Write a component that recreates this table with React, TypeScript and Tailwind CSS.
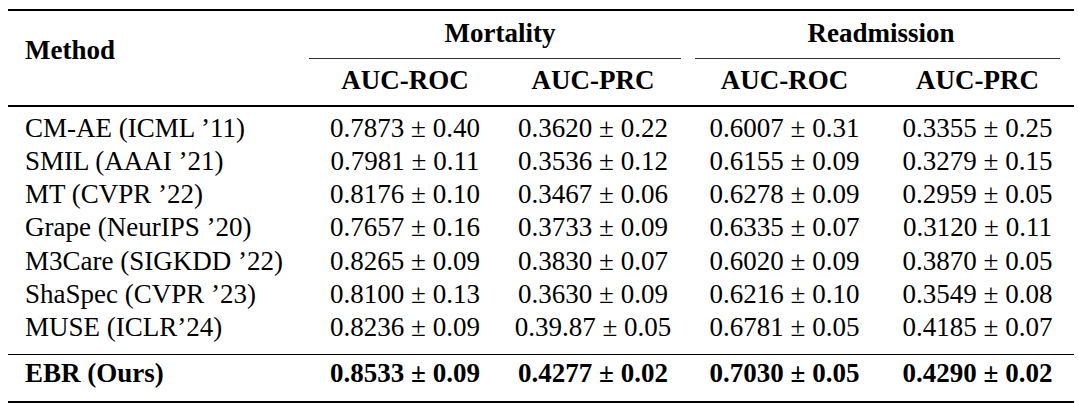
const cols = "grid grid-cols-[304px_186px_190px_193px_193px]";

const rows: string[][] = [
  ["CM-AE (ICML ’11)", "0.7873 ± 0.40", "0.3620 ± 0.22", "0.6007 ± 0.31", "0.3355 ± 0.25"],
  ["SMIL (AAAI ’21)", "0.7981 ± 0.11", "0.3536 ± 0.12", "0.6155 ± 0.09", "0.3279 ± 0.15"],
  ["MT (CVPR ’22)", "0.8176 ± 0.10", "0.3467 ± 0.06", "0.6278 ± 0.09", "0.2959 ± 0.05"],
  ["Grape (NeurIPS ’20)", "0.7657 ± 0.16", "0.3733 ± 0.09", "0.6335 ± 0.07", "0.3120 ± 0.11"],
  ["M3Care (SIGKDD ’22)", "0.8265 ± 0.09", "0.3830 ± 0.07", "0.6020 ± 0.09", "0.3870 ± 0.05"],
  ["ShaSpec (CVPR ’23)", "0.8100 ± 0.13", "0.3630 ± 0.09", "0.6216 ± 0.10", "0.3549 ± 0.08"],
  ["MUSE (ICLR’24)", "0.8236 ± 0.09", "0.39.87 ± 0.05", "0.6781 ± 0.05", "0.4185 ± 0.07"],
];

const ours = ["EBR (Ours)", "0.8533 ± 0.09", "0.4277 ± 0.02", "0.7030 ± 0.05", "0.4290 ± 0.02"];

function Row({ cells, bold }: { cells: string[]; bold?: boolean }) {
  return (
    <div className={`${cols} h-[33.33px] leading-[33px] ${bold ? "font-bold" : ""}`}>
      <div className="pl-[17px] whitespace-nowrap">{cells[0]}</div>
      {cells.slice(1).map((c, i) => (
        <div key={i} className="text-center whitespace-nowrap">
          {c}
        </div>
      ))}
    </div>
  );
}

export default function App() {
  return (
    <div className="w-[1078px] h-[403px] bg-white text-black font-['Liberation_Serif',serif] text-[27px] overflow-hidden">
      <div className="ml-[8px] w-[1066px] pt-[9px] flex flex-col">
        {/* toprule */}
        <div className="h-[2px] bg-black" />

        {/* header */}
        <div className="flex font-bold">
          <div className="w-[304px] pl-[17px] pt-[23px] leading-[33px]">Method</div>
          <div className="flex flex-col">
            <div className="grid grid-cols-[376px_386px] pt-[6px] leading-[33px]">
              <div className="text-center">Mortality</div>
              <div className="text-center">Readmission</div>
            </div>
            <div className="grid grid-cols-[376px_386px] mt-[8px]">
              <div className="h-px bg-[#333] ml-[-3px] mr-[7px]" />
              <div className="h-px bg-[#333] ml-[7px] mr-[14px]" />
            </div>
            <div className="grid grid-cols-[186px_190px_193px_193px] mt-[5px] leading-[33px]">
              <div className="text-center">AUC-ROC</div>
              <div className="text-center">AUC-PRC</div>
              <div className="text-center">AUC-ROC</div>
              <div className="text-center">AUC-PRC</div>
            </div>
          </div>
        </div>

        {/* midrule */}
        <div className="mt-[8px] h-[1.5px] bg-black" />

        <div className="pt-[5px]">
          {rows.map((r, i) => (
            <Row key={i} cells={r} />
          ))}
        </div>

        {/* midrule */}
        <div className="mt-[9px] h-[1.5px] bg-black" />

        <div className="pt-[2px]">
          <Row cells={ours} bold />
        </div>

        {/* bottomrule */}
        <div className="mt-[10px] h-[2px] bg-black" />
      </div>
    </div>
  );
}
